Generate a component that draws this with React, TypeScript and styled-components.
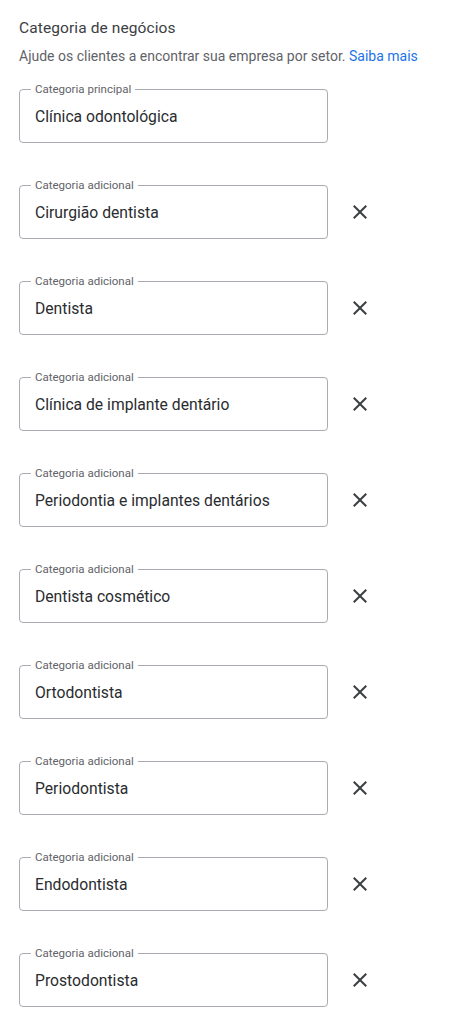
import React from "react";
import styled, { createGlobalStyle } from "styled-components";

const Global = createGlobalStyle`
  html, body { margin: 0; padding: 0; background: #fff; }
  body { font-family: Roboto, "Noto Sans", Arial, sans-serif; -webkit-font-smoothing: antialiased; }
`;

const Page = styled.div`
  padding: 16px 0 0 19px;
  width: 436px;
`;

const Title = styled.h2`
  margin: 0;
  font-size: 15.5px;
  line-height: 24px;
  font-weight: 400;
  color: #3c4043;
  letter-spacing: 0.1px;
`;

const Subtitle = styled.p`
  margin: 6px 0 0;
  font-size: 14px;
  line-height: 20px;
  color: #5f6368;
`;

const Link = styled.a`
  color: #1a73e8;
  text-decoration: none;
`;

const List = styled.div`
  margin-top: 23px;
  display: flex;
  flex-direction: column;
  gap: 42px;
`;

const Row = styled.div`
  display: flex;
  align-items: center;
`;

const Field = styled.div`
  position: relative;
  box-sizing: border-box;
  width: 309px;
  height: 54px;
  border: 1px solid #a8abb0;
  border-radius: 4px;
  display: flex;
  align-items: center;
  padding: 2px 15px 0;
`;

const Label = styled.span`
  position: absolute;
  top: -8px;
  left: 11px;
  padding: 0 4px 0 4px;
  background: #fff;
  font-size: 11.5px;
  line-height: 14px;
  color: #5f6368;
`;

const Value = styled.span`
  font-size: 15.7px;
  line-height: 24px;
  color: #2a2c2f;
`;

const RemoveButton = styled.button`
  margin-left: 17px;
  width: 30px;
  height: 30px;
  border: 0;
  padding: 0;
  background: transparent;
  display: flex;
  align-items: center;
  justify-content: center;
  cursor: pointer;
  color: #3c4043;
`;

const CloseIcon = () => (
  <svg width="24" height="24" viewBox="0 0 24 24" aria-hidden="true">
    <path
      fill="currentColor"
      d="M19 6.41L17.59 5 12 10.59 6.41 5 5 6.41 10.59 12 5 17.59 6.41 19 12 13.41 17.59 19 19 17.59 13.41 12z"
    />
  </svg>
);

const extras = [
  "Cirurgião dentista",
  "Dentista",
  "Clínica de implante dentário",
  "Periodontia e implantes dentários",
  "Dentista cosmético",
  "Ortodontista",
  "Periodontista",
  "Endodontista",
  "Prostodontista",
];

export default function App() {
  return (
    <>
      <Global />
      <Page>
        <Title>Categoria de negócios</Title>
        <Subtitle>
          Ajude os clientes a encontrar sua empresa por setor. <Link href="#">Saiba mais</Link>
        </Subtitle>
        <List>
          <Row>
            <Field>
              <Label>Categoria principal</Label>
              <Value>Clínica odontológica</Value>
            </Field>
          </Row>
          {extras.map((v) => (
            <Row key={v}>
              <Field>
                <Label>Categoria adicional</Label>
                <Value>{v}</Value>
              </Field>
              <RemoveButton aria-label="Remover">
                <CloseIcon />
              </RemoveButton>
            </Row>
          ))}
        </List>
      </Page>
    </>
  );
}
